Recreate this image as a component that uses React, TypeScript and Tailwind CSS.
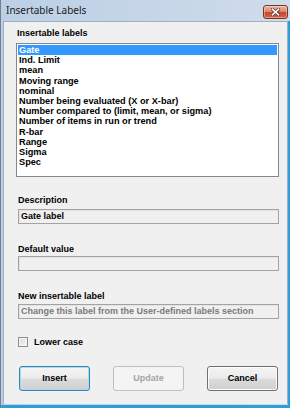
import React from "react";

const items = [
  "Gate",
  "Ind. Limit",
  "mean",
  "Moving range",
  "nominal",
  "Number being evaluated (X or X-bar)",
  "Number compared to (limit, mean, or sigma)",
  "Number of items in run or trend",
  "R-bar",
  "Range",
  "Sigma",
  "Spec",
];

function CloseButton() {
  return (
    <div className="absolute left-[262px] top-[5px] w-[25px] h-[14px] rounded-[3px] border border-[#7a3325] bg-[linear-gradient(to_bottom,#eab3a6_0%,#dd8a74_45%,#c8452c_55%,#d5664a_100%)] flex items-center justify-center shadow-[inset_0_0_0_1px_rgba(255,255,255,0.35)]">
      <svg width="9" height="8" viewBox="0 0 9 8">
        <path d="M1 1 L8 7 M8 1 L1 7" stroke="#5a1e14" strokeWidth="3" strokeLinecap="square" />
        <path d="M1.3 1.2 L7.7 6.8 M7.7 1.2 L1.3 6.8" stroke="#ffffff" strokeWidth="1.6" strokeLinecap="square" />
      </svg>
    </div>
  );
}

function Field({ children, text = "text-black" }: { children?: React.ReactNode; text?: string }) {
  return (
    <div
      className={`ml-[2px] w-[261px] h-[15px] border border-[#a3a3a3] bg-[#f0f0f0] shadow-[inset_1px_1px_0_#e3e3e3] flex items-center pl-[2px] text-[9px] font-bold leading-[11px] ${text}`}
    >
      {children}
    </div>
  );
}

function Btn({
  label,
  kind,
}: {
  label: string;
  kind: "default" | "normal" | "disabled";
}) {
  const base =
    "w-[71px] h-[25px] rounded-[3px] flex items-center justify-center text-[9px] font-bold";
  if (kind === "disabled") {
    return (
      <div className={`${base} border border-[#bfbfbf] bg-[#f4f4f4] text-[#a5a5a5]`}>
        {label}
      </div>
    );
  }
  if (kind === "default") {
    return (
      <div
        className={`${base} border border-[#3c7fb1] bg-[linear-gradient(to_bottom,#f4f4f4_0%,#ececec_48%,#dcdcdc_52%,#cfcfcf_100%)] shadow-[inset_0_0_0_1px_#a6dcf5] text-black`}
      >
        {label}
      </div>
    );
  }
  return (
    <div
      className={`${base} border border-[#707070] bg-[linear-gradient(to_bottom,#f4f4f4_0%,#ececec_48%,#dcdcdc_52%,#cfcfcf_100%)] shadow-[inset_0_0_0_1px_#fcfcfc] text-black`}
    >
      {label}
    </div>
  );
}

export default function App() {
  return (
    <div
      className="relative w-[290px] h-[408px] bg-[linear-gradient(to_right,#bccfe5,#cfdcea)] border-l border-[#6f8193] flex flex-col overflow-hidden"
      style={{ fontFamily: '"Liberation Sans", Arial, sans-serif' }}
    >
      <div className="h-[21px] shrink-0 flex items-center pl-[5px] text-[10px] text-[#1b1b1b]" style={{ fontFamily: '"Noto Sans", "Liberation Sans", sans-serif' }}>
        Insertable Labels
      </div>
      <CloseButton />
      <div className="ml-[2px] mr-[2px] h-[383px] shrink-0 bg-[#f0f0f0] border border-[#9fb0c3] border-b-0 flex flex-col pl-[12px]">
        <div className="mt-[6px] ml-[1px] h-[11px] leading-[11px] text-[9px] font-bold text-black">
          Insertable labels
        </div>
        <div className="mt-[4px] w-[263px] h-[134px] border border-[#828790] bg-white p-[1px]">
          {items.map((it, i) => (
            <div
              key={it}
              className={`h-[10.2px] leading-[10.2px] pl-[1px] text-[9.2px] font-bold whitespace-nowrap ${
                i === 0 ? "bg-[#3399ff] text-white" : "text-black"
              }`}
            >
              {it}
            </div>
          ))}
        </div>
        <div className="mt-[18px] ml-[2px] h-[11px] leading-[11px] text-[9px] font-bold text-black">
          Description
        </div>
        <div className="mt-[3px]">
          <Field>Gate label</Field>
        </div>
        <div className="mt-[20px] ml-[2px] h-[11px] leading-[11px] text-[9px] font-bold text-black">
          Default value
        </div>
        <div className="mt-[1px]">
          <Field />
        </div>
        <div className="mt-[20px] ml-[2px] h-[11px] leading-[11px] text-[9px] font-bold text-black">
          New insertable label
        </div>
        <div className="mt-[2px]">
          <Field text="text-[#7a7a7a]">Change this label from the User-defined labels section</Field>
        </div>
        <div className="mt-[18px] ml-[2px] flex items-center gap-[6px] h-[10px]">
          <div className="w-[10px] h-[10px] border border-[#8e8f8f] bg-[linear-gradient(135deg,#dcdcdc,#f6f6f6)] shadow-[inset_0_0_0_1px_#f4f4f4]" />
          <span className="text-[9px] font-bold text-black leading-[11px]">Lower case</span>
        </div>
        <div className="mt-[19px] ml-[3px] flex gap-[23px]">
          <Btn label="Insert" kind="default" />
          <Btn label="Update" kind="disabled" />
          <Btn label="Cancel" kind="normal" />
        </div>
      </div>
      <div className="absolute left-0 right-0 bottom-0 h-[3px] bg-[#2b9fd8]" />
      <div className="absolute top-[21px] right-0 bottom-0 w-[2px] bg-[#2b9fd8]" />
    </div>
  );
}
